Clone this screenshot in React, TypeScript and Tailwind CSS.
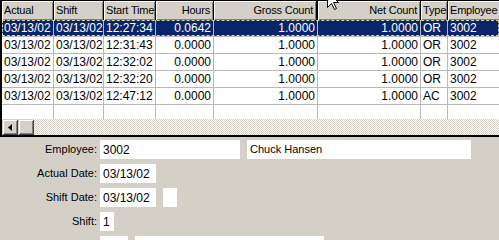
import React from "react";

type Col = { w: string; label: string; right?: boolean; hb?: string };

const cols: Col[] = [
  { w: "w-[52px]", label: "Actual" },
  { w: "w-[50px]", label: "Shift" },
  { w: "w-[52px]", label: "Start Time" },
  { w: "w-[58px]", label: "Hours", right: true },
  { w: "w-[104px]", label: "Gross Count", right: true, hb: "border-r-2" },
  { w: "w-[103px]", label: "Net Count", right: true },
  { w: "w-[27px]", label: "Type" },
  { w: "w-[80px]", label: "Employee" },
];

const rows = [
  ["03/13/02", "03/13/02", "12:27:34", "0.0642", "1.0000", "1.0000", "OR", "3002"],
  ["03/13/02", "03/13/02", "12:31:43", "0.0000", "1.0000", "1.0000", "OR", "3002"],
  ["03/13/02", "03/13/02", "12:32:02", "0.0000", "1.0000", "1.0000", "OR", "3002"],
  ["03/13/02", "03/13/02", "12:32:20", "0.0000", "1.0000", "1.0000", "OR", "3002"],
  ["03/13/02", "03/13/02", "12:47:12", "0.0000", "1.0000", "1.0000", "AC", "3002"],
];

const font = "font-['Liberation_Sans',Arial,sans-serif]";

function Field({ w, text, big = true }: { w: string; text?: string; big?: boolean }) {
  return (
    <div
      className={`${w} h-[19px] bg-white pl-[3px] flex items-center shrink-0 whitespace-nowrap ${
        big ? "text-[12px]" : "text-[11px]"
      } text-black leading-none`}
    >
      {text}
    </div>
  );
}

function Row({ label, children }: { label: string; children: React.ReactNode }) {
  return (
    <div className="flex items-center h-[19px]">
      <div className="w-[97px] text-right text-[11px] text-black leading-none whitespace-nowrap">{label}</div>
      <div className="ml-[3px] flex items-center gap-[7px]">{children}</div>
    </div>
  );
}

export default function App() {
  return (
    <div className={`relative w-[499px] h-[240px] overflow-hidden bg-[#d4d0c8] ${font}`}>
      {/* Grid */}
      <div className="border-l-2 border-t border-b-2 border-black bg-white overflow-hidden">
        {/* header */}
        <div className="flex h-[19px] bg-[#d4d0c8]">
          {cols.map((c, i) => (
            <div
              key={i}
              className={`${c.w} shrink-0 h-[19px] ${c.hb ?? "border-r"} border-black shadow-[inset_1px_1px_0_#ffffff,inset_-1px_-1px_0_#808080] flex items-center text-[11px] tracking-[-0.2px] text-black leading-none whitespace-nowrap overflow-hidden ${
                c.right ? "justify-end pr-[3px]" : "pl-[2px]"
              }`}
            >
              {c.label}
            </div>
          ))}
        </div>
        {/* data rows */}
        {rows.map((r, ri) => {
          const sel = ri === 0;
          return (
            <div
              key={ri}
              className={`relative flex h-[17px] border-b border-[#b8b8b8] ${
                sel ? "bg-[#0a246a] text-white" : "bg-white text-black"
              }`}
            >
              {r.map((v, ci) => (
                <div
                  key={ci}
                  className={`${cols[ci].w} shrink-0 h-[16px] border-r border-[#b8b8b8] flex items-center text-[12px] leading-none whitespace-nowrap overflow-hidden ${
                    cols[ci].right ? "justify-end pr-[2px]" : "pl-[2px]"
                  }`}
                >
                  {v}
                </div>
              ))}
              {sel && (
                <div className="absolute inset-0 border border-dashed border-[#d8d890] pointer-events-none" />
              )}
            </div>
          );
        })}
        {/* empty partial row */}
        <div className="flex h-[14px] bg-white">
          {cols.map((c, i) => (
            <div key={i} className={`${c.w} shrink-0 h-[14px] border-r border-[#b8b8b8]`} />
          ))}
        </div>
        {/* scrollbar */}
        <div className="flex h-[16px]">
          <div className="w-[16px] h-[16px] bg-[#d4d0c8] shadow-[inset_1px_1px_0_#d4d0c8,inset_-1px_-1px_0_#404040,inset_2px_2px_0_#ffffff,inset_-2px_-2px_0_#808080] flex items-center justify-center shrink-0">
            <svg width="4" height="7" viewBox="0 0 4 7">
              <path d="M4 0 L0 3.5 L4 7 Z" fill="#000" />
            </svg>
          </div>
          <div className="w-[16px] h-[16px] bg-[#d4d0c8] shadow-[inset_1px_1px_0_#d4d0c8,inset_-1px_-1px_0_#404040,inset_2px_2px_0_#ffffff,inset_-2px_-2px_0_#808080] shrink-0" />
          <div className="flex-1 h-[16px] bg-[repeating-conic-gradient(#d4d0c8_0_25%,#ffffff_0_50%)] bg-[length:2px_2px]" />
        </div>
      </div>

      {/* form */}
      <div className="flex flex-col gap-[5px] pt-[3px]">
        <Row label="Employee:">
          <Field w="w-[140px]" text="3002" />
          <Field w="w-[224px]" text="Chuck Hansen" big={false} />
        </Row>
        <Row label="Actual Date:">
          <Field w="w-[56px]" text="03/13/02" />
        </Row>
        <Row label="Shift Date:">
          <Field w="w-[56px]" text="03/13/02" />
          <Field w="w-[14px]" />
        </Row>
        <Row label="Shift:">
          <Field w="w-[14px]" text="1" />
        </Row>
        <Row label="">
          <Field w="w-[28px]" />
          <Field w="w-[189px]" />
        </Row>
      </div>

      {/* mouse cursor */}
      <svg
        className="absolute left-[327px] top-[-9px] pointer-events-none"
        width="12"
        height="20"
        viewBox="0 0 12 20"
      >
        <path
          d="M0.5 0.5 L0.5 16.5 L4.5 12.5 L7.5 18.5 L9.5 17.5 L6.5 11.5 L11.5 11.5 Z"
          fill="#ffffff"
          stroke="#000000"
          strokeWidth="1"
        />
      </svg>
    </div>
  );
}
